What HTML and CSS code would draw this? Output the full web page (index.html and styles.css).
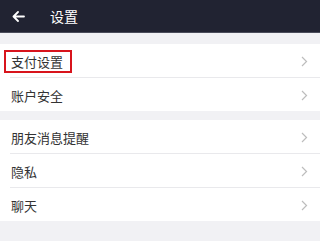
FILE: index.html
```html
<!DOCTYPE html>
<html lang="zh">
<head>
<meta charset="utf-8">
<meta name="viewport" content="width=device-width, initial-scale=1">
<link rel="stylesheet" href="styles.css">
</head>
<body>
<div class="page">
  <header class="topbar">
    <svg class="back" width="13" height="11" viewBox="0 0 13 11"><path d="M12 5.5H1.8M6 1L1.5 5.5L6 10" fill="none" stroke="#fff" stroke-width="1.8" stroke-linecap="round" stroke-linejoin="round"/></svg>
    <span class="title">设置</span>
  </header>
  <div class="gap top"></div>
  <section class="group">
    <div class="row"><span class="label marked">支付设置</span><svg class="chev" width="7" height="11" viewBox="0 0 7 11"><path d="M1 1L5.5 5.5L1 10" fill="none" stroke="#bdbdbd" stroke-width="1.2"/></svg></div>
    <div class="sep"></div>
    <div class="row"><span class="label">账户安全</span><svg class="chev" width="7" height="11" viewBox="0 0 7 11"><path d="M1 1L5.5 5.5L1 10" fill="none" stroke="#bdbdbd" stroke-width="1.2"/></svg></div>
  </section>
  <div class="gap mid"></div>
  <section class="group">
    <div class="row"><span class="label">朋友消息提醒</span><svg class="chev" width="7" height="11" viewBox="0 0 7 11"><path d="M1 1L5.5 5.5L1 10" fill="none" stroke="#bdbdbd" stroke-width="1.2"/></svg></div>
    <div class="sep"></div>
    <div class="row"><span class="label">隐私</span><svg class="chev" width="7" height="11" viewBox="0 0 7 11"><path d="M1 1L5.5 5.5L1 10" fill="none" stroke="#bdbdbd" stroke-width="1.2"/></svg></div>
    <div class="sep"></div>
    <div class="row"><span class="label">聊天</span><svg class="chev" width="7" height="11" viewBox="0 0 7 11"><path d="M1 1L5.5 5.5L1 10" fill="none" stroke="#bdbdbd" stroke-width="1.2"/></svg></div>
  </section>
</div>
</body>
</html>
```
FILE: styles.css
```css
html, body {
  margin: 0;
  padding: 0;
  background: #f1f1f4;
}
.page {
  width: 100%;
  height: 241px;
  overflow: hidden;
  font-family: "Noto Sans CJK SC", "Noto Sans", sans-serif;
  background: #f1f1f4;
}
.topbar {
  height: 33px;
  background: #212332;
  border-bottom: 1px solid #4a4c5a;
  display: flex;
  align-items: center;
  box-sizing: border-box;
  padding-left: 12px;
}
.back {
  display: block;
}
.title {
  margin-left: 25px;
  color: #fff;
  font-size: 14px;
  line-height: 16px;
}
.gap.top {
  height: 11px;
}
.gap.mid {
  height: 9px;
}
.group {
  background: #fff;
}
.row {
  height: 33px;
  display: flex;
  align-items: center;
  justify-content: space-between;
  padding: 2px 12px 0 11px;
  box-sizing: border-box;
}
.label {
  font-size: 13px;
  line-height: 19px;
  color: #333;
}
.label.marked {
  border: 2px solid #d8141c;
  padding: 0 7px 0 5px;
  margin-left: -7px;
}
.chev {
  display: block;
}
.sep {
  height: 1px;
  margin-left: 10px;
  background: #e9e9ec;
}
```
